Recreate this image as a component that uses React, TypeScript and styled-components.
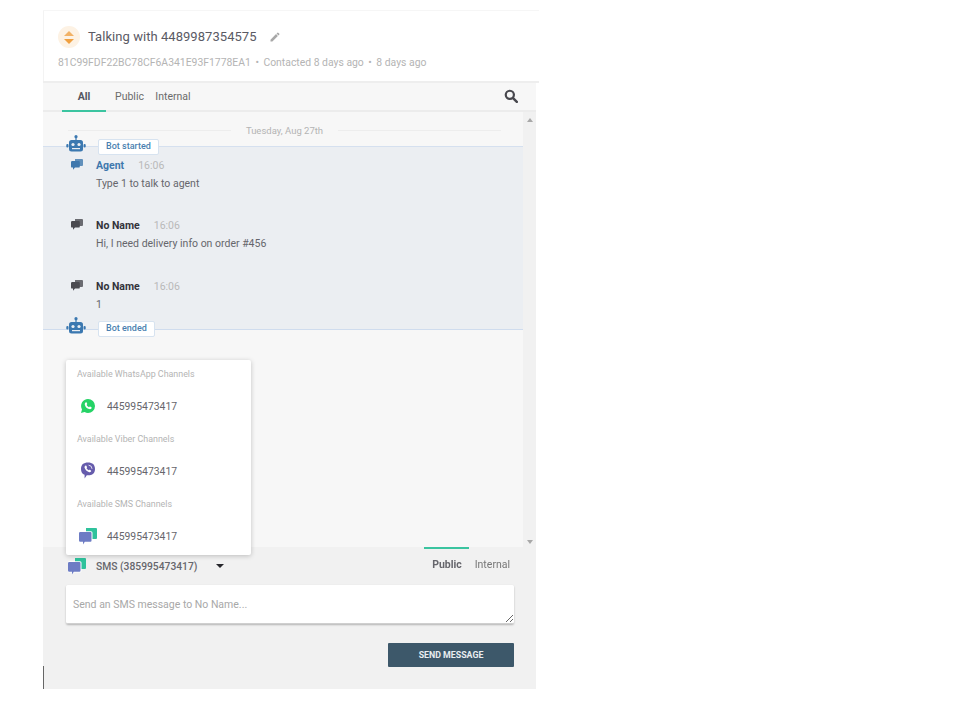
import React from 'react';
import styled, { createGlobalStyle } from 'styled-components';

const Global = createGlobalStyle`
  html, body {
    margin: 0;
    padding: 0;
    background: #fff;
    font-family: Roboto, "Liberation Sans", sans-serif;
  }
`;

const Page = styled.div`
  width: 970px;
  height: 711px;
  padding: 10px 0 0 43px;
  box-sizing: border-box;
  overflow: hidden;
`;

const Panel = styled.div`
  position: relative;
  width: 496px;
  height: 679px;
  display: flex;
  flex-direction: column;
`;

const LeftMark = styled.div`
  position: absolute;
  left: 0;
  bottom: 0;
  width: 1px;
  height: 23px;
  background: #666;
  z-index: 3;
`;

const Header = styled.header`
  height: 73px;
  flex: none;
  box-sizing: border-box;
  border-top: 1px solid #f6f6f6;
  border-bottom: 2px solid #eeeeee;
  box-shadow: inset 1px 0 0 #f3f3f3;
  padding: 15px 0 0 15px;
`;

const TitleRow = styled.div`
  display: flex;
  align-items: center;
  height: 22px;
`;

const Priority = styled.div`
  width: 22px;
  height: 22px;
  border-radius: 50%;
  background: #fdf2e4;
  display: flex;
  align-items: center;
  justify-content: center;
  margin-right: 8px;
`;

const Title = styled.h1`
  margin: -2px 0 0;
  font-size: 13px;
  font-weight: 400;
  letter-spacing: 0.05px;
  color: #5a5a64;
`;

const EditIcon = styled.svg`
  width: 12px;
  height: 12px;
  margin-left: 12px;
`;

const Meta = styled.div`
  display: flex;
  gap: 4.5px;
  margin-top: 8px;
  font-size: 10.4px;
  color: #b4b4b4;
  white-space: nowrap;
`;

const Body = styled.div`
  width: 493px;
  flex: 1;
  display: flex;
  flex-direction: column;
  background: #f1f1f1;
  min-height: 0;
`;

const Tabs = styled.div`
  height: 29px;
  flex: none;
  box-sizing: border-box;
  border-bottom: 2px solid #ececec;
  background: #f7f7f7;
  display: flex;
  align-items: stretch;
  padding-left: 19px;
  padding-right: 18px;
  font-size: 10.5px;
`;

const Tab = styled.div<{ $active?: boolean; $width: number }>`
  width: ${p => p.$width}px;
  height: 29px;
  box-sizing: border-box;
  padding-top: 7px;
  text-align: center;
  color: ${p => (p.$active ? '#55555f' : '#6b6b6b')};
  font-weight: ${p => (p.$active ? 700 : 400)};
  border-bottom: 2px solid ${p => (p.$active ? '#3bc4a0' : 'transparent')};
`;

const SearchIcon = styled.svg`
  width: 14px;
  height: 14px;
  margin-left: auto;
  margin-top: 6px;
`;

const ThreadWrap = styled.div`
  flex: 1;
  display: flex;
  min-height: 0;
`;

const Thread = styled.div`
  width: 480px;
  background: #f7f7f7;
  display: flex;
  flex-direction: column;
`;

const Scrollbar = styled.div`
  width: 13px;
  display: flex;
  flex-direction: column;
  justify-content: space-between;
  align-items: center;
  padding: 6px 0 3px;
  box-sizing: border-box;
  background: #f1f1f1;
`;

const Arrow = styled.div<{ $down?: boolean }>`
  width: 0;
  height: 0;
  border-left: 3px solid transparent;
  border-right: 3px solid transparent;
  ${p => (p.$down ? 'border-top: 4px solid #a8a8a8;' : 'border-bottom: 4px solid #a8a8a8;')}
`;

const DateRow = styled.div`
  height: 21px;
  flex: none;
  display: flex;
  align-items: center;
  padding: 8px 22px 0 25px;
  gap: 15px;
  font-size: 9.5px;
  color: #b4b4b4;
  white-space: nowrap;
  box-sizing: content-box;
`;

const DateLine = styled.div`
  flex: 1;
  height: 1px;
  background: #ededed;
`;

const BotZone = styled.div`
  background: #ebeef2;
  border-top: 1px solid #d5e0ef;
  border-bottom: 1px solid #cfdcee;
  height: 184px;
  flex: none;
  position: relative;
  margin-top: 5px;
  box-sizing: border-box;
`;

const BotMarker = styled.div<{ $end?: boolean }>`
  position: absolute;
  left: 23px;
  ${p => (p.$end ? 'bottom: -6px;' : 'top: -12px;')}
  display: flex;
  align-items: flex-end;
  gap: 12px;
`;

const BotGlyph = styled.svg`
  width: 20px;
  height: 17px;
  margin-bottom: 1px;
`;

const BotBadge = styled.span`
  height: 14px;
  line-height: 13px;
  padding: 0 7px;
  margin-bottom: -2px;
  background: #fff;
  border: 1px solid #d7e3f0;
  border-radius: 2px;
  font-size: 9px;
  font-weight: 500;
  color: #4a7fb0;
`;

const Message = styled.div`
  display: flex;
  height: 60.5px;
  padding-left: 28px;
  box-sizing: border-box;
`;

const MessageIcon = styled.svg`
  width: 12px;
  height: 11px;
  margin-right: 13px;
  flex: none;
`;

const MessageHead = styled.div`
  display: flex;
  gap: 14px;
  align-items: baseline;
  height: 18px;
`;

const Author = styled.span<{ $bot?: boolean }>`
  font-size: 10.5px;
  font-weight: 700;
  color: ${p => (p.$bot ? '#3f78ad' : '#33333b')};
`;

const Time = styled.span`
  font-size: 10.5px;
  color: #b9b9b9;
`;

const MessageText = styled.div`
  font-size: 10.5px;
  color: #66666c;
`;

const MessageList = styled.div`
  padding-top: 11.75px;
`;

const Composer = styled.div`
  height: 142px;
  flex: none;
  box-sizing: border-box;
  background: #f1f1f1;
  padding: 0 22px 0 23px;
  position: relative;
`;

const ComposerTop = styled.div`
  display: flex;
  align-items: center;
  height: 38px;
  padding-left: 2px;
`;

const ChannelName = styled.span`
  font-size: 10.3px;
  font-weight: 500;
  color: #66666c;
  margin-left: 10px;
`;

const Caret = styled.div`
  width: 0;
  height: 0;
  border-left: 4px solid transparent;
  border-right: 4px solid transparent;
  border-top: 4px solid #26262c;
  margin-left: 19px;
`;

const VisibilityTabs = styled.div`
  margin-left: auto;
  margin-right: 4px;
  margin-top: -4px;
  display: flex;
  gap: 13px;
  font-size: 10.5px;
`;

const VisibilityTab = styled.span<{ $active?: boolean }>`
  position: relative;
  color: ${p => (p.$active ? '#66666c' : '#777')};
  font-weight: ${p => (p.$active ? 700 : 400)};
  &::before {
    content: ${p => (p.$active ? "''" : 'none')};
    position: absolute;
    left: -8px;
    right: -7px;
    top: -11px;
    height: 2px;
    background: #3bc4a0;
  }
`;

const MessageInput = styled.textarea`
  display: block;
  width: 448px;
  height: 39px;
  box-sizing: border-box;
  border: none;
  border-bottom: 1px solid #cfcfcf;
  border-radius: 2px;
  box-shadow: 0 1px 2px rgba(0, 0, 0, 0.25);
  background: #fff;
  padding: 13px 7px;
  font-family: inherit;
  font-size: 10.5px;
  outline: none;
  &::placeholder {
    color: #a8a8a8;
  }
`;

const Actions = styled.div`
  display: flex;
  justify-content: flex-end;
  width: 448px;
  margin-top: 19px;
`;

const SendButton = styled.button`
  width: 126px;
  height: 24px;
  border: none;
  border-radius: 1px;
  background: #3d586a;
  color: #e8edf0;
  font-family: inherit;
  font-size: 8.8px;
  font-weight: 700;
  padding: 0;
`;

const ChannelMenu = styled.div`
  position: absolute;
  left: 23px;
  top: 350px;
  width: 185px;
  height: 195px;
  box-sizing: border-box;
  padding: 8px 0 0 11px;
  background: #fff;
  border-radius: 2px;
  box-shadow: 0 1px 5px rgba(0, 0, 0, 0.22);
  z-index: 2;
`;

const MenuHeading = styled.div`
  font-size: 8.9px;
  height: 11px;
  line-height: 13px;
  color: #b4b4b4;
`;

const MenuItem = styled.div`
  display: flex;
  align-items: center;
  height: 54px;
  font-size: 10.4px;
  color: #66666c;
`;

const MenuIconBox = styled.div`
  width: 20px;
  height: 20px;
  margin-left: 1px;
  margin-right: 9px;
  display: flex;
  align-items: center;
  justify-content: center;
`;

const PriorityIcon = () => (
  <svg width="10" height="13" viewBox="0 0 10 13">
    <path d="M5 0 L10 5 H0 Z" fill="#f2b266" />
    <path d="M0 8 H10 L5 13 Z" fill="#f0a040" />
  </svg>
);

const BotIcon = () => (
  <BotGlyph viewBox="0 0 20 17">
    <circle cx="10" cy="1.7" r="1.6" fill="#3b78b0" />
    <rect x="9.4" y="2" width="1.2" height="3.5" fill="#3b78b0" />
    <rect x="3" y="5" width="14" height="11.5" rx="2.5" fill="#3b78b0" />
    <rect x="0.3" y="9" width="2.2" height="3.4" rx="1" fill="#3b78b0" />
    <rect x="17.5" y="9" width="2.2" height="3.4" rx="1" fill="#3b78b0" />
    <circle cx="7" cy="9.5" r="1.6" fill="#ebeef2" />
    <circle cx="13" cy="9.5" r="1.6" fill="#ebeef2" />
    <rect x="6" y="13" width="8" height="1.2" fill="#ebeef2" />
  </BotGlyph>
);

const ChatIcon = ({ color }: { color: string }) => (
  <MessageIcon viewBox="0 0 12 11">
    <path d="M4 0 H11 a1 1 0 0 1 1 1 V6 a1 1 0 0 1 -1 1 H4 Z" fill={color} opacity="0.8" />
    <path d="M1.2 2 H7.6 a1.2 1.2 0 0 1 1.2 1.2 V7.4 a1.2 1.2 0 0 1 -1.2 1.2 H4 L2 10.8 V8.6 H1.2 a1.2 1.2 0 0 1 -1.2 -1.2 V3.2 a1.2 1.2 0 0 1 1.2 -1.2 Z" fill={color} />
  </MessageIcon>
);

const WhatsAppIcon = () => (
  <svg width="16" height="16" viewBox="0 0 16 16">
    <path d="M8 1 a7 7 0 0 1 0 14 a7 7 0 0 1 -3.4 -.9 L1 15 l1 -3.5 A7 7 0 0 1 8 1 Z" fill="#25d366" />
    <path d="M5.6 4.4 c.3 -.3 .8 -.3 1 .1 l.6 1.2 c.1 .3 0 .5 -.2 .7 l-.4 .5 c.5 1 1.3 1.8 2.4 2.3 l.5 -.5 c.2 -.2 .5 -.3 .7 -.1 l1.2 .6 c.3 .2 .4 .6 .2 1 c-.5 .9 -1.5 1.2 -2.5 .9 c-2 -.6 -3.6 -2.2 -4.2 -4.2 c-.3 -1 0 -1.9 .7 -2.5 Z" fill="#fff" />
  </svg>
);

const ViberIcon = () => (
  <svg width="16" height="18" viewBox="0 0 16 18">
    <path d="M8 0.5 C12.5 0.5 15 2.6 15 7 C15 11.4 12.5 13.3 8 13.3 L6.8 13.3 L4.6 16.5 V12.8 C2.2 12 1 10 1 7 C1 2.6 3.5 0.5 8 0.5 Z" fill="#665cac" />
    <path d="M5.3 3.8 c.4 -.4 .9 -.3 1.1 .1 l.6 1.2 c.1 .3 0 .5 -.2 .7 l-.3 .3 c.4 1 1.2 1.8 2.2 2.2 l.4 -.4 c.2 -.2 .5 -.2 .7 -.1 l1.1 .7 c.4 .2 .4 .7 .1 1 c-.6 .8 -1.4 1 -2.3 .6 c-1.9 -.8 -3.3 -2.2 -4 -4 c-.3 -.9 -.2 -1.7 .6 -2.3 Z" fill="#fff" />
    <path d="M8.6 3.2 a3.6 3.6 0 0 1 3.4 3.6" fill="none" stroke="#fff" strokeWidth="0.8" />
  </svg>
);

const SmsIcon = () => (
  <svg width="18" height="17" viewBox="0 0 18 17">
    <path d="M7 0 H17 a1 1 0 0 1 1 1 V10 a1 1 0 0 1 -1 1 H7 Z" fill="#2fc29c" />
    <path d="M1 3.2 H12 a1.5 1.5 0 0 1 1.5 1.5 V13 a1.5 1.5 0 0 1 -1.5 1.5 H6 L4 17 V14.5 H1 a1 1 0 0 1 -1 -1 V4.2 a1 1 0 0 1 1 -1 Z" fill="#fff" />
    <path d="M1.2 4 H11.5 a1 1 0 0 1 1 1 V12.8 a1 1 0 0 1 -1 1 H5.8 L4 16.4 V13.8 H1.2 a1.2 1.2 0 0 1 -1.2 -1.2 V5.2 a1.2 1.2 0 0 1 1.2 -1.2 Z" fill="#6d7cc4" />
  </svg>
);

const channels = [
  { title: 'Available WhatsApp Channels', icon: <WhatsAppIcon /> },
  { title: 'Available Viber Channels', icon: <ViberIcon /> },
  { title: 'Available SMS Channels', icon: <SmsIcon /> },
];

const messages = [
  { author: 'Agent', bot: true, text: 'Type 1 to talk to agent' },
  { author: 'No Name', bot: false, text: 'Hi, I need delivery info on order #456' },
  { author: 'No Name', bot: false, text: '1' },
];

const App: React.FC = () => (
  <Page>
    <Global />
    <Panel>
      <Header>
        <TitleRow>
          <Priority>
            <PriorityIcon />
          </Priority>
          <Title>Talking with 4489987354575</Title>
          <EditIcon viewBox="0 0 24 24">
            <path d="M3 17.25V21h3.75L17.81 9.94l-3.75-3.75L3 17.25zM20.71 7.04a1 1 0 0 0 0-1.41l-2.34-2.34a1 1 0 0 0-1.41 0l-1.83 1.83 3.75 3.75 1.83-1.83z" fill="#a8a8a8" />
          </EditIcon>
        </TitleRow>
        <Meta>
          <span>81C99FDF22BC78CF6A341E93F1778EA1</span>
          <span>•</span>
          <span>Contacted 8 days ago</span>
          <span>•</span>
          <span>8 days ago</span>
        </Meta>
      </Header>
      <Body>
        <Tabs>
          <Tab $active $width={44}>All</Tab>
          <Tab $width={47}>Public</Tab>
          <Tab $width={40}>Internal</Tab>
          <SearchIcon viewBox="0 0 24 24">
            <circle cx="10" cy="10" r="7" fill="none" stroke="#48484e" strokeWidth="3.8" />
            <path d="M15.5 15.5 L22 22" stroke="#48484e" strokeWidth="4.2" strokeLinecap="round" />
          </SearchIcon>
        </Tabs>
        <ThreadWrap>
          <Thread>
            <DateRow>
              <DateLine />
              <span>Tuesday, Aug 27th</span>
              <DateLine />
            </DateRow>
            <BotZone>
              <BotMarker>
                <BotIcon />
                <BotBadge>Bot started</BotBadge>
              </BotMarker>
              <MessageList>
                {messages.map((m, i) => (
                  <Message key={i}>
                    <ChatIcon color={m.bot ? '#3f78ad' : '#4a4a50'} />
                    <div>
                      <MessageHead>
                        <Author $bot={m.bot}>{m.author}</Author>
                        <Time>16:06</Time>
                      </MessageHead>
                      <MessageText>{m.text}</MessageText>
                    </div>
                  </Message>
                ))}
              </MessageList>
              <BotMarker $end>
                <BotIcon />
                <BotBadge>Bot ended</BotBadge>
              </BotMarker>
            </BotZone>
          </Thread>
          <Scrollbar>
            <Arrow />
            <Arrow $down />
          </Scrollbar>
        </ThreadWrap>
        <Composer>
          <ComposerTop>
            <SmsIcon />
            <ChannelName>SMS (385995473417)</ChannelName>
            <Caret />
            <VisibilityTabs>
              <VisibilityTab $active>Public</VisibilityTab>
              <VisibilityTab>Internal</VisibilityTab>
            </VisibilityTabs>
          </ComposerTop>
          <MessageInput placeholder="Send an SMS message to No Name..." />
          <Actions>
            <SendButton>SEND MESSAGE</SendButton>
          </Actions>
        </Composer>
      </Body>
      <ChannelMenu>
        {channels.map(c => (
          <div key={c.title}>
            <MenuHeading>{c.title}</MenuHeading>
            <MenuItem>
              <MenuIconBox>{c.icon}</MenuIconBox>
              445995473417
            </MenuItem>
          </div>
        ))}
      </ChannelMenu>
      <LeftMark />
    </Panel>
  </Page>
);

export default App;
